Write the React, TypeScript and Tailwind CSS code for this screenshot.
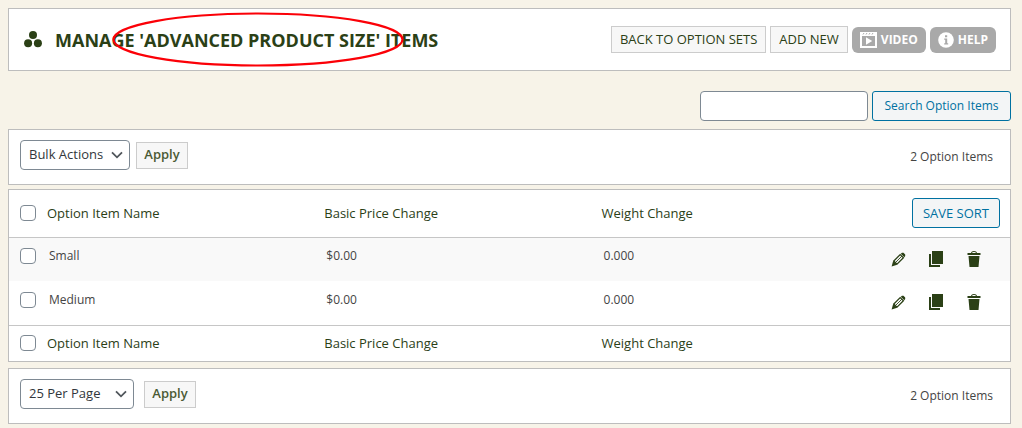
import type { ReactNode } from "react";

const items = [
  { name: "Small", price: "$0.00", weight: "0.000" },
  { name: "Medium", price: "$0.00", weight: "0.000" },
];

const iconLink = "flex h-5 w-[18px] items-center justify-center text-[#2b4016]";

function GroupIcon() {
  return (
    <svg viewBox="0 0 18 17" className="h-[17px] w-[18px]" fill="currentColor" aria-hidden="true">
      <circle cx="9" cy="4" r="4" />
      <circle cx="4.1" cy="12.2" r="4" />
      <circle cx="13.9" cy="12.2" r="4" />
    </svg>
  );
}

function VideoIcon() {
  return (
    <svg viewBox="0 0 17 16" className="h-4 w-[17px]" aria-hidden="true">
      <path fill="currentColor" fillRule="evenodd" d="M0 0h17v16H0zM2 4v10h13V4z" />
      <path stroke="#a9a9a9" strokeWidth="1" d="M3 2.5l1-1.5M6 2.5l1-1.5M9 2.5l1-1.5M12 2.5l1-1.5" />
      <path fill="currentColor" d="M6 5.3v7.4L12.2 9z" />
    </svg>
  );
}

function InfoIcon() {
  return (
    <svg viewBox="0 0 16 16" className="size-4" aria-hidden="true">
      <circle cx="8" cy="8" r="7.8" fill="currentColor" />
      <path fill="#a9a9a9" d="M7 3.3h2.2v2H7zM6.2 6.5h3v4.7h1v1.3h-4v-1.3h1V7.8h-1z" />
    </svg>
  );
}

function PencilIcon() {
  return (
    <svg viewBox="0 0 15 15" className="size-[15px]" aria-hidden="true">
      <path
        d="M9.200 2.600L12.400 5.800 6 12.200 2.800 9z"
        fill="none"
        stroke="currentColor"
        strokeWidth="1.300"
      />
      <path d="M10.800 4.200L4.400 10.600" stroke="currentColor" strokeWidth="0.900" />
      <path d="M9.800 1.700L11 .8h1.500L14.200 2.500V4L13.300 5.200zM2.200 8.800L.6 14.400 6.200 12.800z" fill="currentColor" />
    </svg>
  );
}

function CopyIcon() {
  return (
    <svg viewBox="0 0 14 17" className="h-[17px] w-[14px]" fill="currentColor" aria-hidden="true">
      <path d="M3 0h11v13H3zM0 3h2v11h9v2H0z" />
    </svg>
  );
}

function TrashIcon() {
  return (
    <svg viewBox="0 0 14 17" className="h-[17px] w-[14px]" fill="currentColor" aria-hidden="true">
      <path
        fillRule="evenodd"
        d="M.5 2H4C4.300.7 5.300 0 7 0s2.700.7 3 2h3.500v2H.5zM5 2h4c-.2-.7-.9-1-2-1s-1.800.3-2 1zM1.500 5h11l-1 11h-9z"
      />
    </svg>
  );
}

function Panel({ children }: { children: ReactNode }) {
  return (
    <section className="flex items-start justify-between border border-[#bdbdbd] bg-white px-[11px] pt-[10px] pb-[14px]">
      {children}
    </section>
  );
}

function Select({ label, options, width }: { label: string; options: string[]; width: string }) {
  return (
    <div className={`grid items-center ${width}`}>
      <select
        aria-label={label}
        className="col-start-1 row-start-1 h-[30px] w-full appearance-none rounded-[4px] border border-[#7e8993] bg-white pr-6 pl-2 text-[13px] text-[#32373c]"
      >
        {options.map((o) => (
          <option key={o}>{o}</option>
        ))}
      </select>
      <svg
        viewBox="0 0 12 8"
        className="pointer-events-none col-start-1 row-start-1 mr-[7px] h-2 w-3 justify-self-end"
        fill="none"
        stroke="#50565b"
        strokeWidth="1.800"
        aria-hidden="true"
      >
        <path d="M1 1.300l5 5 5-5" />
      </svg>
    </div>
  );
}

function ApplyButton() {
  return (
    <button className="h-[27px] w-[52px] border border-[#cccccc] bg-[#f7f7f7] text-[13px] font-semibold text-[#4a5a34]">
      Apply
    </button>
  );
}

function Check({ label }: { label: string }) {
  return (
    <input
      type="checkbox"
      aria-label={label}
      className="block size-4 appearance-none rounded-[4px] border border-[#7e8993] bg-white checked:bg-[#0071a1]"
    />
  );
}

function HeadCells() {
  return (
    <>
      <th scope="col" className="pl-[11px]">
        <Check label="Select all" />
      </th>
      <th scope="col" className="font-normal">Option Item Name</th>
      <th scope="col" className="font-normal">Basic Price Change</th>
      <th scope="col" className="font-normal">Weight Change</th>
    </>
  );
}

export default function App() {
  return (
    <main className="min-h-screen bg-[#f7f3e8] pt-2 pr-[11px] pb-1 pl-2 font-['Open_Sans','Noto_Sans',sans-serif] text-[13px] text-[#2b4016]">
      <header className="relative flex h-[63px] items-center justify-between border border-[#bdbdbd] bg-white pr-[14px] pl-[15px]">
        <div className="flex items-center gap-[13px]">
          <GroupIcon />
          <h1 className="text-lg font-bold">MANAGE 'ADVANCED PRODUCT SIZE' ITEMS</h1>
        </div>
        <svg
          viewBox="0 0 292 55"
          className="pointer-events-none absolute top-[3px] left-[103px] h-[55px] w-[292px]"
          fill="none"
          stroke="#fb0007"
          strokeWidth="2.200"
          aria-hidden="true"
        >
          <ellipse cx="146" cy="27.500" rx="144.500" ry="26" />
        </svg>
        <nav className="flex items-center gap-1">
          <a href="#sets" className="flex h-[27px] items-center border border-[#cccccc] bg-[#f7f7f7] px-2">
            BACK TO OPTION SETS
          </a>
          <a href="#new" className="flex h-[27px] items-center border border-[#cccccc] bg-[#f7f7f7] px-2">
            ADD NEW
          </a>
          <a href="#video" className="flex h-[26px] items-center gap-1 rounded-[6px] bg-[#a9a9a9] px-2 text-xs font-bold text-white">
            <VideoIcon />
            VIDEO
          </a>
          <a href="#help" className="flex h-[26px] items-center gap-1 rounded-[6px] bg-[#a9a9a9] px-2 text-xs font-bold text-white">
            <InfoIcon />
            HELP
          </a>
        </nav>
      </header>

      <form className="mt-5 mb-2 flex justify-end gap-1" onSubmit={(e) => e.preventDefault()}>
        <input
          type="search"
          aria-label="Search Option Items"
          className="h-[30px] w-[168px] rounded-[4px] border border-[#7e8993] bg-white px-2"
        />
        <button className="h-[30px] w-[139px] rounded-[3px] border border-[#0071a1] bg-[#f3f5f6] text-xs text-[#0071a1]">
          Search Option Items
        </button>
      </form>

      <Panel>
        <div className="flex items-center gap-[6px]">
          <Select label="Bulk action" options={["Bulk Actions", "Delete"]} width="w-[110px]" />
          <ApplyButton />
        </div>
        <p className="mr-[6px] self-center pt-1 text-xs text-[#444444]">2 Option Items</p>
      </Panel>

      <section className="mt-1 mb-[6px] border border-[#bdbdbd] bg-white">
        <table className="w-full table-fixed text-left">
          <colgroup>
            <col className="w-[38px]" />
            <col className="w-[27.7%]" />
            <col className="w-[27.7%]" />
            <col />
            <col className="w-[132px]" />
          </colgroup>
          <thead>
            <tr className="h-[47px] border-b border-[#c6c6c6]">
              <HeadCells />
              <th scope="col" className="pr-[10px] text-right font-normal">
                <button className="h-[30px] rounded-[3px] border border-[#0071a1] bg-[#f3f5f6] px-[10px] text-[#0071a1]">
                  SAVE SORT
                </button>
              </th>
            </tr>
          </thead>
          <tbody className="text-xs text-[#444444]">
            {items.map((item) => (
              <tr key={item.name} className="h-11 odd:bg-[#f9f9f9]">
                <td className="pb-[6px] pl-[11px]">
                  <Check label={`Select ${item.name}`} />
                </td>
                <td className="pb-[6px] pl-[2px]">{item.name}</td>
                <td className="pb-[6px] pl-[2px]">{item.price}</td>
                <td className="pb-[6px] pl-[2px]">{item.weight}</td>
                <td>
                  <div className="flex gap-5 pl-[11px]">
                    <a href="#edit" aria-label={`Edit ${item.name}`} className={iconLink}>
                      <PencilIcon />
                    </a>
                    <a href="#copy" aria-label={`Copy ${item.name}`} className={iconLink}>
                      <CopyIcon />
                    </a>
                    <a href="#delete" aria-label={`Delete ${item.name}`} className={iconLink}>
                      <TrashIcon />
                    </a>
                  </div>
                </td>
              </tr>
            ))}
          </tbody>
          <tfoot>
            <tr className="h-9 border-t border-[#c6c6c6]">
              <HeadCells />
              <td />
            </tr>
          </tfoot>
        </table>
      </section>

      <Panel>
        <div className="flex items-center gap-[10px]">
          <Select label="Items per page" options={["25 Per Page", "50 Per Page", "100 Per Page"]} width="w-[114px]" />
          <ApplyButton />
        </div>
        <p className="mr-[6px] self-center pt-1 text-xs text-[#444444]">2 Option Items</p>
      </Panel>
    </main>
  );
}
